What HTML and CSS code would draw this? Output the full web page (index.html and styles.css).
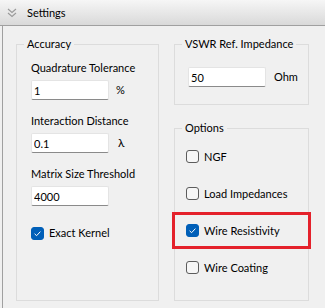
FILE: index.html
```html
<!DOCTYPE html>
<html lang="en">

<head>
    <meta charset="UTF-8">
    <title>Settings</title>
    <link rel="stylesheet" href="styles.css">
</head>

<body>
    <div class="titlebar">
        <svg class="chevron" width="10" height="10" viewBox="0 0 10 10">
            <path d="M1 1 L5 4.5 L9 1 M1 5 L5 8.5 L9 5" fill="none" stroke="#9a9a9a" stroke-width="1.1" />
        </svg>
        <span class="title">Settings</span>
    </div>

    <div class="panel">
        <div class="columns">
            <fieldset class="group">
                <legend>Accuracy</legend>
                <div class="group-body accuracy">
                    <div class="field">
                        <div class="field-label">Quadrature Tolerance</div>
                        <div class="input-row">
                            <input class="text-input" type="text" value="1">
                            <span class="unit">%</span>
                        </div>
                    </div>
                    <div class="field">
                        <div class="field-label">Interaction Distance</div>
                        <div class="input-row">
                            <input class="text-input" type="text" value="0.1">
                            <span class="unit lambda">λ</span>
                        </div>
                    </div>
                    <div class="field">
                        <div class="field-label">Matrix Size Threshold</div>
                        <div class="input-row">
                            <input class="text-input" type="text" value="4000">
                        </div>
                    </div>
                    <div class="check kernel">
                        <span class="box checked">
                            <svg width="13" height="13" viewBox="0 0 13 13">
                                <path d="M3.6 6.8 L5.6 8.7 L9.4 4.6" fill="none" stroke="#fff" stroke-width="1" />
                            </svg>
                        </span>
                        <span>Exact Kernel</span>
                    </div>
                </div>
            </fieldset>

            <div class="right-col">
                <fieldset class="group">
                    <legend>VSWR Ref. Impedance</legend>
                    <div class="group-body vswr">
                        <div class="input-row">
                            <input class="text-input" type="text" value="50">
                            <span class="unit ohm">Ohm</span>
                        </div>
                    </div>
                </fieldset>

                <fieldset class="group options">
                    <legend>Options</legend>
                    <div class="group-body option-list">
                        <div class="check option">
                            <span class="box"></span>
                            <span>NGF</span>
                        </div>
                        <div class="check option">
                            <span class="box"></span>
                            <span>Load Impedances</span>
                        </div>
                        <div class="check option highlight">
                            <span class="box checked">
                                <svg width="13" height="13" viewBox="0 0 13 13">
                                    <path d="M3.6 6.8 L5.6 8.7 L9.4 4.6" fill="none" stroke="#fff" stroke-width="1" />
                                </svg>
                            </span>
                            <span>Wire Resistivity</span>
                        </div>
                        <div class="check option">
                            <span class="box"></span>
                            <span>Wire Coating</span>
                        </div>
                    </div>
                </fieldset>
            </div>
        </div>
    </div>
</body>

</html>
```

FILE: styles.css
```css
body {
    margin: 0;
    padding: 0;
    width: 325px;
    height: 308px;
    overflow: hidden;
    background-color: #f0f0f0;
    font-family: 'Lato', 'Noto Sans', sans-serif;
    font-size: 11px;
    color: #000;
}

.titlebar {
    height: 25px;
    border-bottom: 1px solid #a0a0a0;
    background: linear-gradient(#f6f6f6, #d9d9d9);
    display: flex;
    align-items: center;
}

.chevron {
    margin-left: 7px;
    margin-top: 1px;
}

.title {
    margin-left: 10px;
    line-height: 16px;
}

.panel {
    margin-left: 2px;
    border-left: 1px solid #a0a0a0;
    height: 282px;
    padding: 10px 0 0 13px;
    box-sizing: border-box;
}

.columns {
    display: grid;
    grid-template-columns: 143px 135px;
    column-gap: 15px;
    height: 265px;
}

.right-col {
    display: flex;
    flex-direction: column;
    gap: 15px;
}

.group {
    margin: 0;
    padding: 0;
    min-width: 0;
    border: 1px solid #dcdcdc;
}

.group legend {
    margin-left: 7px;
    padding: 0 3px;
    line-height: 16px;
    white-space: nowrap;
}

.options {
    flex: 1;
}

.accuracy {
    padding: 8px 0 0 14px;
}

.field {
    margin-bottom: 13px;
}

.field-label {
    line-height: 16px;
    margin-bottom: 4px;
    white-space: nowrap;
}

.input-row {
    display: flex;
    align-items: center;
}

.text-input {
    width: 78px;
    height: 20px;
    box-sizing: border-box;
    margin: 0;
    padding: 0 2px;
    border: 1px solid #e4e4e4;
    border-bottom-color: #8a8a8a;
    border-radius: 2px;
    background: #fff;
    font-family: inherit;
    font-size: 11px;
    color: #000;
}

.unit {
    margin-left: 7px;
    line-height: 16px;
}

.lambda {
    margin-left: 9px;
    font-size: 12px;
}

.ohm {
    margin-left: 8px;
}

.vswr {
    padding: 15px 0 17px 13px;
}

.check {
    display: flex;
    align-items: center;
    line-height: 16px;
    white-space: nowrap;
}

.kernel {
    margin-top: 19px;
    height: 16px;
}

.box {
    width: 13px;
    height: 13px;
    box-sizing: border-box;
    border: 1px solid #5c5c5c;
    border-radius: 3px;
    background: #f6f6f6;
    margin-right: 5px;
    flex-shrink: 0;
}

.box.checked {
    border-color: #005fb8;
    background: #005fb8;
}

.box svg {
    display: block;
    margin: -1px;
}

.option-list {
    padding: 2px 0 0 11px;
}

.option {
    height: 37px;
    position: relative;
}

.highlight::after {
    content: "";
    position: absolute;
    left: -14px;
    top: 0;
    width: 139px;
    height: 37px;
    box-sizing: border-box;
    border: 3px solid #e4212b;
}
```
